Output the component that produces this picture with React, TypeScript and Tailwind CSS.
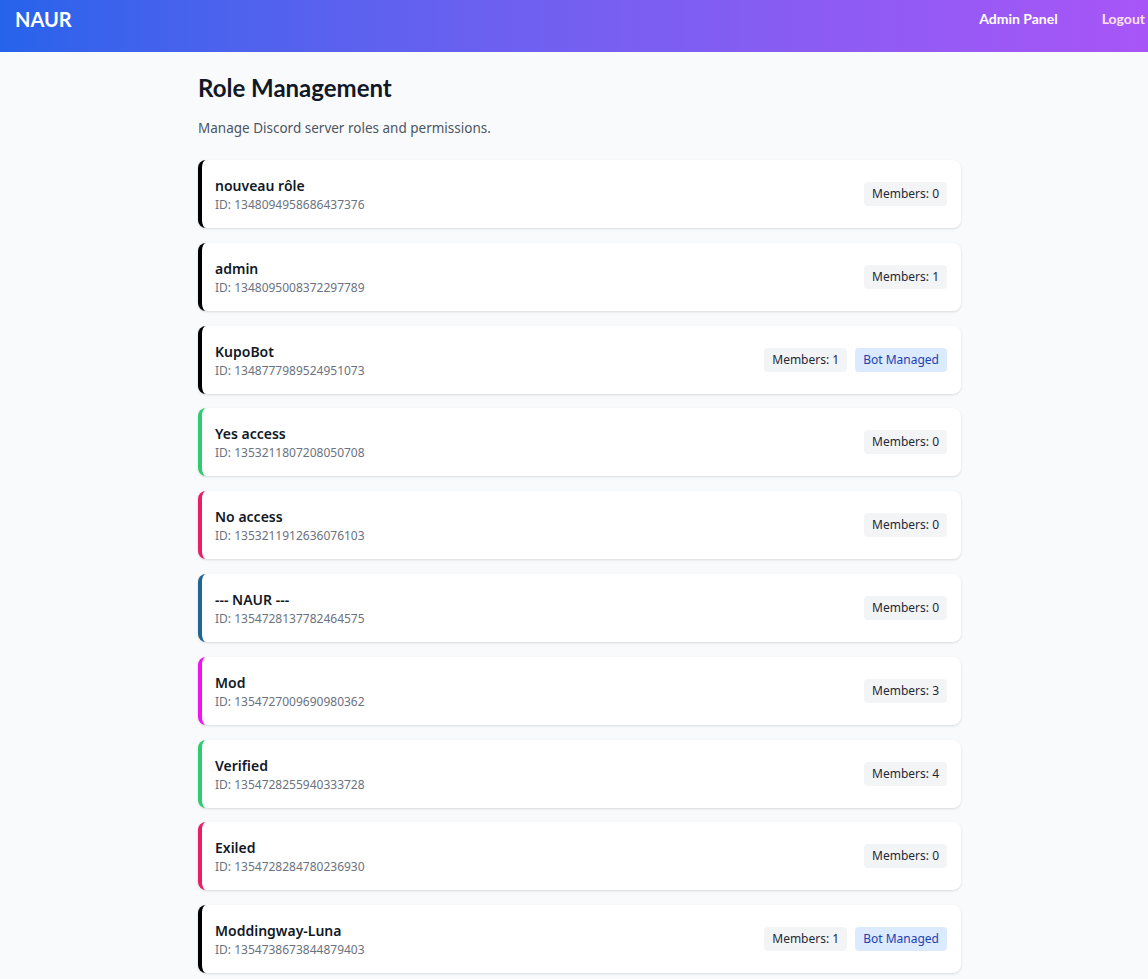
import React from 'react';

interface Role {
  id: string;
  name: string;
  color: string;
  members: number;
  managed?: boolean;
}

const roles: Role[] = [
  { id: '1348094958686437376', name: 'nouveau rôle', color: 'border-l-[#000000]', members: 0 },
  { id: '1348095008372297789', name: 'admin', color: 'border-l-[#000000]', members: 1 },
  { id: '1348777989524951073', name: 'KupoBot', color: 'border-l-[#000000]', members: 1, managed: true },
  { id: '1353211807208050708', name: 'Yes access', color: 'border-l-[#2ecc71]', members: 0 },
  { id: '1353211912636076103', name: 'No access', color: 'border-l-[#e91e63]', members: 0 },
  { id: '1354728137782464575', name: '--- NAUR ---', color: 'border-l-[#206694]', members: 0 },
  { id: '1354727009690980362', name: 'Mod', color: 'border-l-[#f012f0]', members: 3 },
  { id: '1354728255940333728', name: 'Verified', color: 'border-l-[#2ecc71]', members: 4 },
  { id: '1354728284780236930', name: 'Exiled', color: 'border-l-[#e91e63]', members: 0 },
  { id: '1354738673844879403', name: 'Moddingway-Luna', color: 'border-l-[#000000]', members: 1, managed: true },
];

const RoleCard: React.FC<{ role: Role }> = ({ role }) => (
  <div className={`bg-white rounded-lg shadow border-l-4 ${role.color} pl-[13px] pr-[14px] pt-[15px] pb-[15px] flex items-center justify-between`}>
    <div>
      <div className="text-sm leading-[22px] font-semibold text-[#111827]">{role.name}</div>
      <div className="text-xs leading-4 text-[#6b7280]">ID: {role.id}</div>
    </div>
    <div className="flex items-center gap-2">
      <span className="bg-[#f3f4f6] text-[#1f2937] text-xs leading-4 px-2 py-1 rounded">Members: {role.members}</span>
      {role.managed && (
        <span className="bg-[#dbeafe] text-[#1e40af] text-xs leading-4 px-2 py-1 rounded">Bot Managed</span>
      )}
    </div>
  </div>
);

export default function App() {
  return (
    <div className="min-h-screen bg-[#f9fafb] font-['Noto_Sans',sans-serif]">
      {/* Header */}
      <header className="h-[52px] bg-gradient-to-r from-[#2563eb] to-[#a855f7] flex items-start justify-between pl-[15px] pr-[3px] pt-[5px] font-['Lato',sans-serif]">
        <span className="text-xl leading-7 font-bold text-white">NAUR</span>
        <nav className="flex items-center gap-[44px] h-7">
          <a className="text-sm font-bold text-white">Admin Panel</a>
          <a className="text-sm font-bold text-[#fde2f3]">Logout</a>
        </nav>
      </header>

      {/* Content */}
      <main className="pl-[198px] pt-[20px] pb-8">
        <div className="w-[763px]">
          <h1 className="text-2xl leading-8 font-bold text-[#111827] font-['Lato',sans-serif]">Role Management</h1>
          <p className="mt-[14px] mb-[22px] text-[13.5px] leading-5 text-[#4b5563]">Manage Discord server roles and permissions.</p>
          <div className="flex flex-col gap-[14.8px]">
            {roles.map(r => (
              <RoleCard key={r.id} role={r} />
            ))}
          </div>
        </div>
      </main>
    </div>
  );
}
